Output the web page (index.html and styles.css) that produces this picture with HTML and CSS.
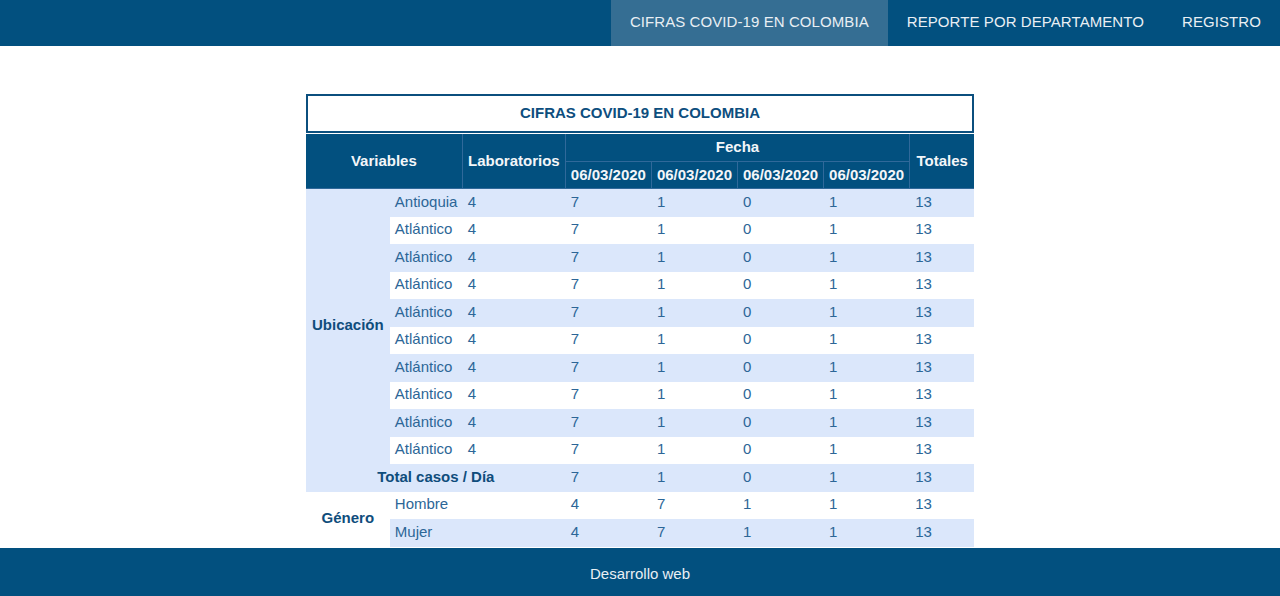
FILE: index.html
```html
<!DOCTYPE html>
<html lang="es">
<head>
<meta charset="utf-8">
<title>Cifras COVID-19 en Colombia</title>
<link rel="stylesheet" href="styles.css">
</head>
<body>
<header class="topbar">
  <nav class="menu">
    <a class="menu-item active" href="#">CIFRAS COVID-19 EN COLOMBIA</a>
    <a class="menu-item" href="#">REPORTE POR DEPARTAMENTO</a>
    <a class="menu-item" href="#">REGISTRO</a>
  </nav>
</header>
<main class="content">
  <table class="cifras">
    <caption class="title">CIFRAS COVID-19 EN COLOMBIA</caption>
    <colgroup>
      <col class="c-group">
      <col class="c-name">
      <col class="c-lab">
      <col class="c-date">
      <col class="c-date">
      <col class="c-date">
      <col class="c-date">
      <col class="c-total">
    </colgroup>
    <thead>
      <tr>
        <th colspan="2" rowspan="2">Variables</th>
        <th rowspan="2">Laboratorios</th>
        <th colspan="4">Fecha</th>
        <th rowspan="2" class="last">Totales</th>
      </tr>
      <tr>
        <th>06/03/2020</th>
        <th>06/03/2020</th>
        <th>06/03/2020</th>
        <th>06/03/2020</th>
      </tr>
    </thead>
    <tbody>
      <tr class="alt">
        <td rowspan="10" class="group alt-cell">Ubicación</td>
        <td>Antioquia</td><td>4</td><td>7</td><td>1</td><td>0</td><td>1</td><td>13</td>
      </tr>
      <tr><td>Atlántico</td><td>4</td><td>7</td><td>1</td><td>0</td><td>1</td><td>13</td></tr>
      <tr class="alt"><td>Atlántico</td><td>4</td><td>7</td><td>1</td><td>0</td><td>1</td><td>13</td></tr>
      <tr><td>Atlántico</td><td>4</td><td>7</td><td>1</td><td>0</td><td>1</td><td>13</td></tr>
      <tr class="alt"><td>Atlántico</td><td>4</td><td>7</td><td>1</td><td>0</td><td>1</td><td>13</td></tr>
      <tr><td>Atlántico</td><td>4</td><td>7</td><td>1</td><td>0</td><td>1</td><td>13</td></tr>
      <tr class="alt"><td>Atlántico</td><td>4</td><td>7</td><td>1</td><td>0</td><td>1</td><td>13</td></tr>
      <tr><td>Atlántico</td><td>4</td><td>7</td><td>1</td><td>0</td><td>1</td><td>13</td></tr>
      <tr class="alt"><td>Atlántico</td><td>4</td><td>7</td><td>1</td><td>0</td><td>1</td><td>13</td></tr>
      <tr><td>Atlántico</td><td>4</td><td>7</td><td>1</td><td>0</td><td>1</td><td>13</td></tr>
      <tr class="alt">
        <td colspan="3" class="total">Total casos / Día</td>
        <td>7</td><td>1</td><td>0</td><td>1</td><td>13</td>
      </tr>
      <tr>
        <td rowspan="2" class="group">Género</td>
        <td colspan="2">Hombre</td><td>4</td><td>7</td><td>1</td><td>1</td><td>13</td>
      </tr>
      <tr class="alt">
        <td colspan="2">Mujer</td><td>4</td><td>7</td><td>1</td><td>1</td><td>13</td>
      </tr>
    </tbody>
  </table>
</main>
<footer class="footer">Desarrollo web</footer>
</body>
</html>
```
FILE: styles.css
```css
* {
  box-sizing: border-box;
}

html, body {
  margin: 0;
  padding: 0;
}

body {
  font-family: "Liberation Sans", Arial, sans-serif;
  font-size: 15px;
  color: #2a6496;
  background: #ffffff;
}

.topbar {
  height: 46px;
  background: #02507f;
  display: flex;
  justify-content: flex-end;
}

.menu {
  display: flex;
  height: 100%;
}

.menu-item {
  display: flex;
  align-items: center;
  padding: 0 19px 4px 19px;
  color: #e9eff4;
  text-decoration: none;
  font-size: 15px;
  letter-spacing: 0.08px;
}

.menu-item.active {
  background: #356e93;
}

.content {
  padding-top: 48px;
  display: flex;
  justify-content: center;
  height: 501px;
}

.cifras {
  border-collapse: separate;
  border-spacing: 0;
  font-size: 15px;
  align-self: flex-start;
}

.c-group { width: 84px; }
.c-name { width: 73px; }
.c-lab { width: 103px; }
.c-date { width: 86px; }
.c-total { width: 64px; }

.title {
  border: 2px solid #0b4f7e;
  color: #0d4e7e;
  font-weight: bold;
  line-height: 21px;
  padding: 6px 0 8px;
  margin-bottom: 1px;
  text-align: center;
}

.cifras th {
  background: #02507f;
  color: #f3f6f9;
  font-weight: bold;
  line-height: 20.5px;
  padding: 3px 5px;
  border-right: 1px solid #30699a;
  border-bottom: 1px solid #30699a;
  text-align: center;
}

.cifras th.last {
  border-right: none;
}

.cifras td {
  line-height: 21.5px;
  padding: 1.5px 5px 4.5px;
  text-align: left;
  color: #2c6697;
}

.cifras tr.alt td {
  background: #dbe7fb;
}

.cifras td.alt-cell {
  background: #dbe7fb;
}

.cifras tr td.group {
  background: #ffffff;
  font-weight: bold;
  color: #0f4d7c;
  text-align: center;
  padding: 1.5px 5px 4.5px;
}

.cifras tr.alt td.group.alt-cell {
  background: #dbe7fb;
}

.cifras td.total {
  font-weight: bold;
  color: #0f4d7c;
  text-align: center;
}

.footer {
  height: 49px;
  margin-top: 1px;
  padding-top: 2px;
  background: #02507f;
  color: #e9eff4;
  display: flex;
  align-items: center;
  justify-content: center;
  font-size: 15px;
}
```
